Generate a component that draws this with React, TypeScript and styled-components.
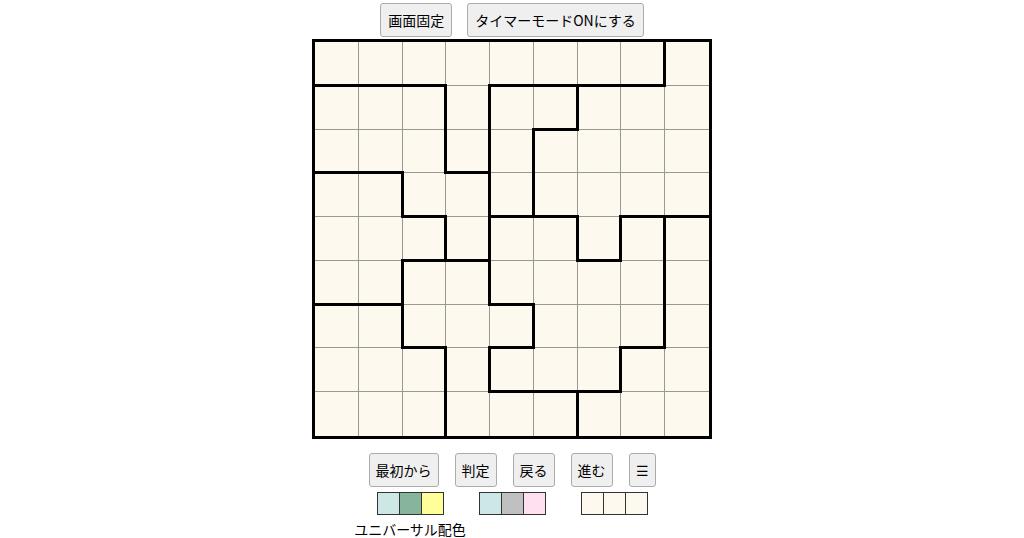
import { FunctionComponent } from "react";
import styled, { createGlobalStyle } from "styled-components";

const GlobalStyle = createGlobalStyle`
  body {
    margin: 0;
    background: #fff;
    font-family: "Noto Sans CJK JP", "Noto Sans", sans-serif;
  }
`

// thick lines between column c and c+1, listed by row
const VERTICAL: Record<number, number[]> = {
  1: [3, 5, 6],
  2: [1, 2, 4, 7, 8],
  3: [1, 2, 3, 4, 5, 7],
  4: [2, 3, 6],
  5: [1, 4, 8],
  6: [4, 7],
  7: [0, 4, 5, 6],
}

// thick lines between row r and r+1, listed by column
const HORIZONTAL: Record<number, number[]> = {
  0: [0, 1, 2, 4, 5, 6, 7],
  1: [5],
  2: [0, 1, 3],
  3: [2, 4, 5, 7, 8],
  4: [2, 3, 6],
  5: [0, 1, 4],
  6: [2, 4, 7],
  7: [4, 5, 6],
}

const SIZE = 9

const Page = styled.div`
  display: flex;
  flex-direction: column;
  align-items: center;
  padding-top: 3px;
`

const Toolbar = styled.div<{ $gap: number }>`
  display: flex;
  gap: ${({ $gap }) => $gap}px;
`

const Button = styled.button<{ $pad?: number }>`
  font-family: "Noto Sans CJK JP", "Noto Sans", sans-serif;
  font-size: 14px;
  line-height: 20px;
  padding: 6px ${({ $pad = 7 }) => $pad}px;
  color: #000;
  background: #efefef;
  border: 1px solid #ababab;
  border-radius: 3px;
  cursor: pointer;
`

const Board = styled.div`
  box-sizing: border-box;
  width: 400px;
  height: 400px;
  margin-top: 2px;
  border: 3px solid #000;
  display: grid;
  grid-template-columns: repeat(${SIZE}, 1fr);
  grid-template-rows: repeat(${SIZE}, 1fr);
  background: #fdf9ee;
`

const Cell = styled.div<{ $lastCol: boolean, $lastRow: boolean }>`
  position: relative;
  background: #fdf9ee;
  border-right: ${({ $lastCol }) => ($lastCol ? "none" : "1px solid #9a9893")};
  border-bottom: ${({ $lastRow }) => ($lastRow ? "none" : "1px solid #9a9893")};
`

const WallRight = styled.span`
  position: absolute;
  z-index: 1;
  top: -2px;
  bottom: -2px;
  right: -2px;
  width: 3px;
  background: #000;
`

const WallBottom = styled.span`
  position: absolute;
  z-index: 1;
  left: -2px;
  right: -2px;
  bottom: -2px;
  height: 3px;
  background: #000;
`

const Controls = styled(Toolbar)`
  margin-top: 14px;
`

const Palettes = styled.div`
  display: flex;
  gap: 35px;
  margin-top: 5px;
`

const PaletteGroup = styled.div`
  width: 67px;
  display: flex;
  flex-direction: column;
  align-items: center;
`

const SwatchRow = styled.div`
  display: flex;
`

const Swatch = styled.div<{ $color: string }>`
  width: 21px;
  height: 21px;
  border: 1px solid #333;
  background: ${({ $color }) => $color};
  & + & {
    margin-left: -1px;
  }
`

const PaletteLabel = styled.div`
  margin-top: 4px;
  font-size: 14px;
  line-height: 20px;
  white-space: nowrap;
  color: #000;
`

const palettes: { colors: string[], label?: string }[] = [
  { colors: ["#cde6e6", "#86b59c", "#ffff99"], label: "ユニバーサル配色" },
  { colors: ["#cde6e6", "#c0c0c0", "#ffe0f0"] },
  { colors: ["#fdf9ee", "#fdf9ee", "#fdf9ee"] },
]

const PuzzleBoard: FunctionComponent = () => {
  const cells = []
  for (let r = 0; r < SIZE; r++) {
    for (let c = 0; c < SIZE; c++) {
      const right = (VERTICAL[c] || []).includes(r)
      const bottom = (HORIZONTAL[r] || []).includes(c)
      cells.push(
        <Cell key={`${r}-${c}`} $lastCol={c === SIZE - 1} $lastRow={r === SIZE - 1}>
          {right && <WallRight />}
          {bottom && <WallBottom />}
        </Cell>
      )
    }
  }
  return <Board>{cells}</Board>
}

const App: FunctionComponent = () => {
  return (
    <Page>
      <GlobalStyle />
      <Toolbar $gap={15}>
        <Button>画面固定</Button>
        <Button>タイマーモードONにする</Button>
      </Toolbar>
      <PuzzleBoard />
      <Controls $gap={16}>
        <Button $pad={6}>最初から</Button>
        <Button $pad={6}>判定</Button>
        <Button $pad={6}>戻る</Button>
        <Button $pad={6}>進む</Button>
        <Button $pad={6}>☰</Button>
      </Controls>
      <Palettes>
        {palettes.map((p, i) => (
          <PaletteGroup key={i}>
            <SwatchRow>
              {p.colors.map((color, j) => <Swatch key={j} $color={color} />)}
            </SwatchRow>
            {p.label && <PaletteLabel>{p.label}</PaletteLabel>}
          </PaletteGroup>
        ))}
      </Palettes>
    </Page>
  )
}

export default App
